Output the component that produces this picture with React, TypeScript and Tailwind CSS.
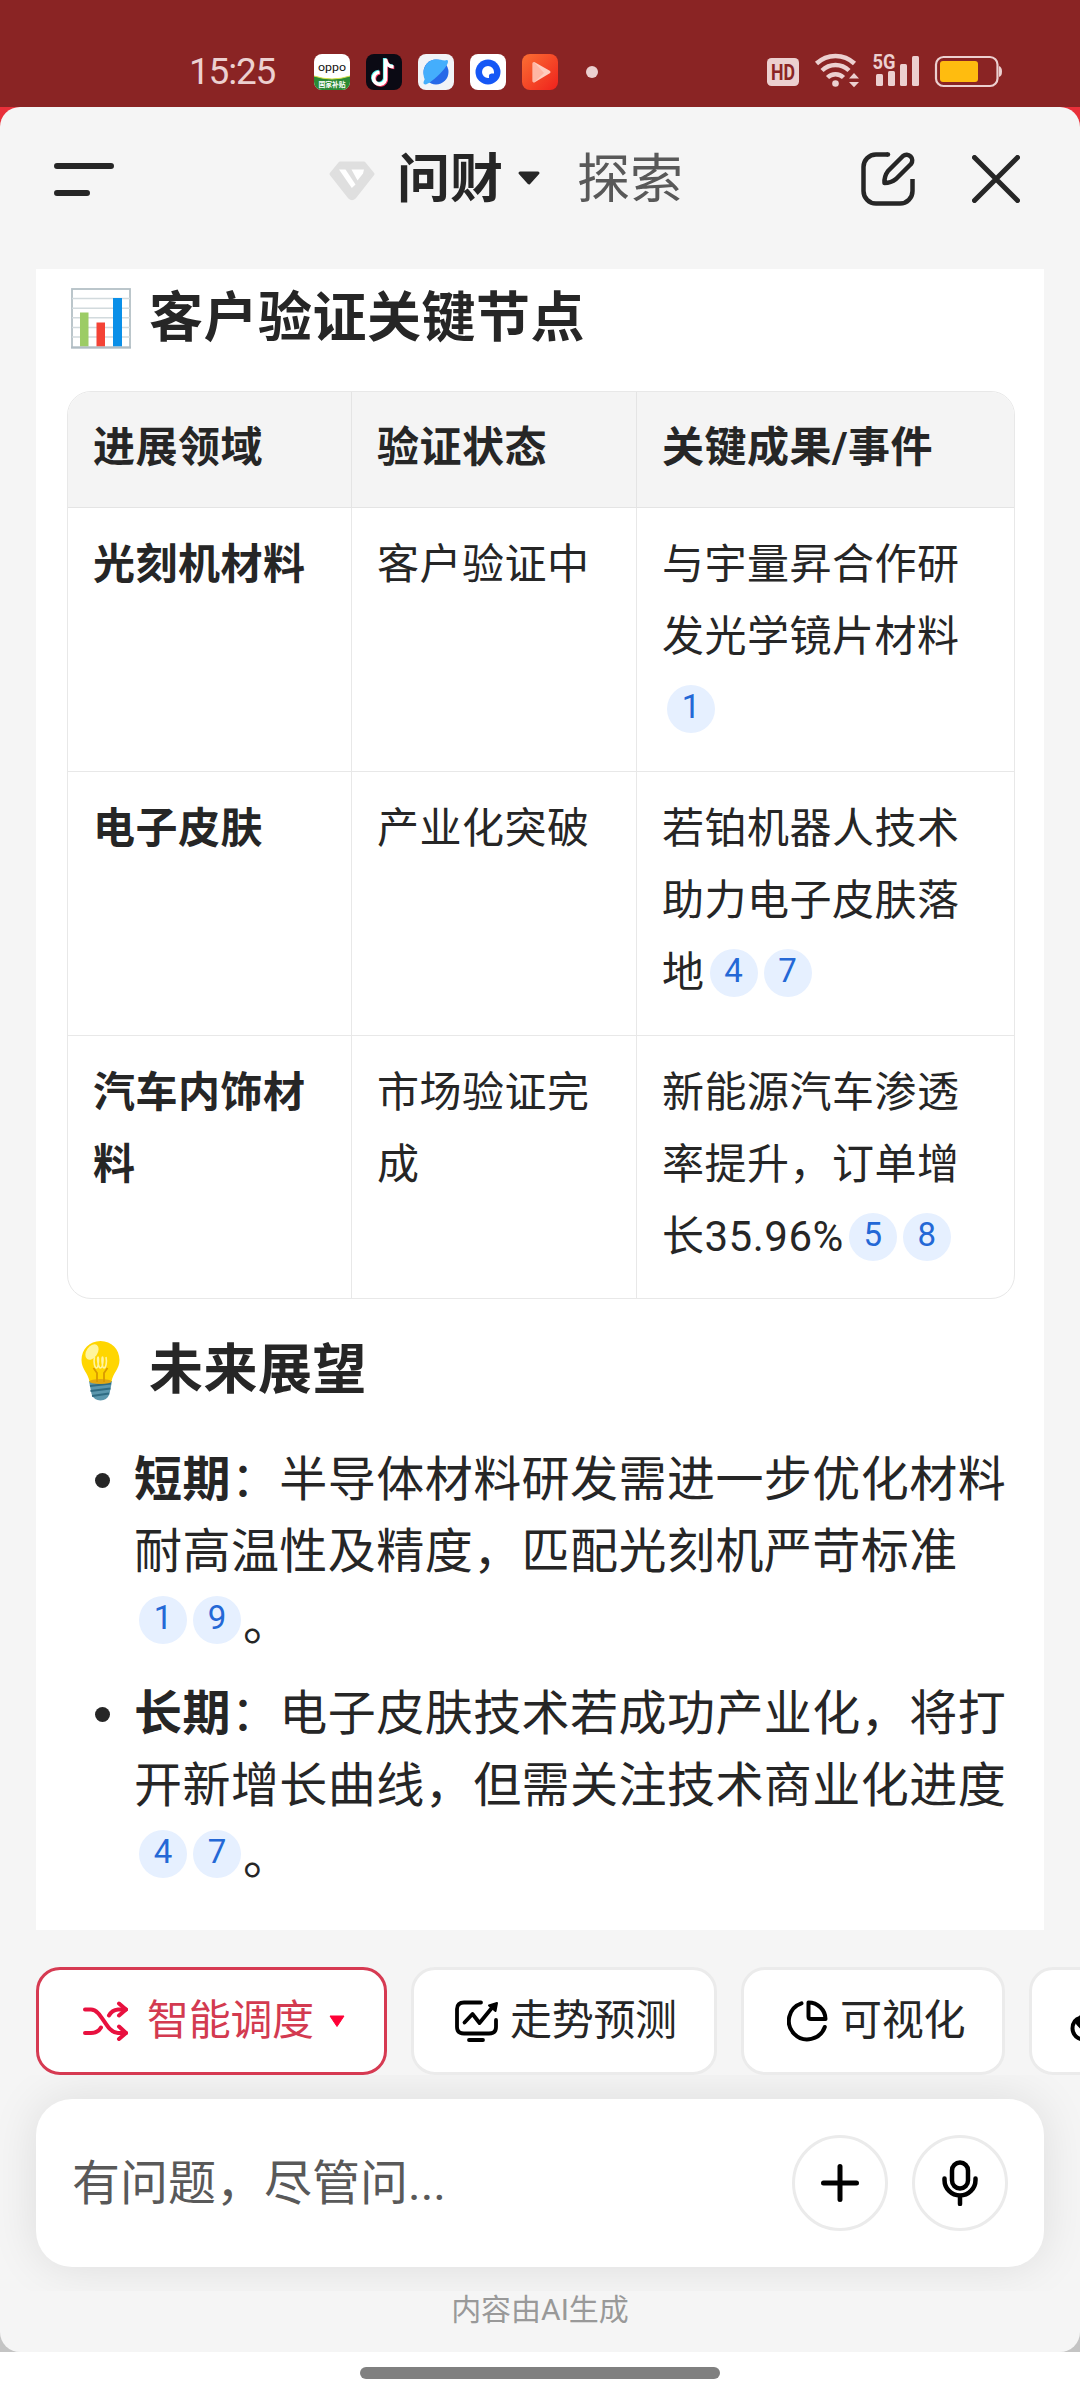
import { ReactNode } from 'react'

const tableRows = [
  {
    field: '光刻机材料',
    status: '客户验证中',
    result: '与宇量昇合作研发光学镜片材料',
    refs: [1],
  },
  {
    field: '电子皮肤',
    status: '产业化突破',
    result: '若铂机器人技术助力电子皮肤落地',
    refs: [4, 7],
  },
  {
    field: '汽车内饰材料',
    status: '市场验证完成',
    result: '新能源汽车渗透率提升，订单增长35.96%',
    refs: [5, 8],
  },
]

const outlook = [
  {
    term: '短期',
    text: '：半导体材料研发需进一步优化材料耐高温性及精度，匹配光刻机严苛标准',
    refs: [1, 9],
  },
  {
    term: '长期',
    text: '：电子皮肤技术若成功产业化，将打开新增长曲线，但需关注技术商业化进度',
    refs: [4, 7],
  },
]

const RefPill = ({ children, raised }: { children: ReactNode; raised?: boolean }) => (
  <span
    className={`ml-[6px] inline-flex size-12 items-center justify-center rounded-full bg-[#e6f0ff] pb-1 text-[33px] leading-none tracking-normal text-[#2468d6] first:ml-[5px] ${
      raised ? 'align-[11px]' : 'align-[5px]'
    }`}
  >
    {children}
  </span>
)

const AppIcons = () => (
  <div className="ml-[39px] flex gap-4">
    <svg width="36" height="36" viewBox="0 0 36 36">
      <defs>
        <clipPath id="oppo">
          <rect width="36" height="36" rx="8" />
        </clipPath>
      </defs>
      <g clipPath="url(#oppo)">
        <rect width="36" height="36" fill="#fff" />
        <path d="M0 22Q18 28 36 22V36H0Z" fill="#2b8a34" />
        <path d="M0 22Q18 28 36 22" fill="none" stroke="#d8e14a" strokeWidth="1" />
      </g>
      <text x="18" y="17" textAnchor="middle" fontSize="11" textLength="28" lengthAdjust="spacingAndGlyphs" fill="#111">
        oppo
      </text>
      <text x="18" y="32.500" textAnchor="middle" fontSize="6.800" fontWeight="700" fill="#fff">
        国家补贴
      </text>
    </svg>
    <svg width="36" height="36" viewBox="0 0 36 36">
      <rect width="36" height="36" rx="8" fill="#0b0a14" />
      <g fill="none" strokeWidth="3.600">
        <path d="M18.700 4V22.500a6 6 0 1 1-6-5M18.700 5c.8 4 4 7 8 7" stroke="#4ff0ec" />
        <path d="M20.300 5.500V24a6 6 0 1 1-6-5M20.300 6.500c.8 4 4 7 8 7" stroke="#f8325c" />
        <path d="M19.500 4.800V23.200a6 6 0 1 1-6-5M19.500 5.800c.8 4 4 7 8 7" stroke="#fff" />
      </g>
    </svg>
    <svg width="36" height="36" viewBox="0 0 36 36">
      <rect width="36" height="36" rx="8" fill="#f1f3f7" />
      <circle cx="18" cy="18" r="12.500" fill="#2668e8" />
      <path d="M27 6.500c1.500-1 3.300-.8 3 1.500-.5 4-8 13-17 19.500-3 2.200-5.500 3.800-7 2.500-1-.9-.3-3 .7-4.800C3 16 8.500 5.500 18 5.500c3.500 0 6 .5 9 1z" fill="#44aefc" />
    </svg>
    <svg width="36" height="36" viewBox="0 0 36 36">
      <rect width="36" height="36" rx="8" fill="#fff" />
      <circle cx="18" cy="18" r="12.500" fill="#1557f5" />
      <path d="M18 12a6 6 0 0 1 6 6v1.500h-2.500a3 3 0 0 0-2.500 3.500v1h-1a6 6 0 0 1 0-12z" fill="#fff" />
    </svg>
    <svg width="36" height="36" viewBox="0 0 36 36">
      <defs>
        <linearGradient id="play" x1="0" y1="0" x2="1" y2="1">
          <stop offset="0" stopColor="#fb6f33" />
          <stop offset="1" stopColor="#ef211c" />
        </linearGradient>
      </defs>
      <rect width="36" height="36" rx="8" fill="url(#play)" />
      <path d="M12 9.500L27 18 12 27Z" fill="#ffcdbf" stroke="#ffcdbf" strokeWidth="3" strokeLinejoin="round" />
      <path d="M10.500 9q0-1 1.500-1L22 19l-10 9.500q-1.500 0-1.500-1.500z" fill="#ffa08a" opacity=".5" />
    </svg>
  </div>
)

const StatusIcons = () => (
  <svg width="240" height="41" viewBox="765 51 240 41" className="ml-[167px]" fill="#ecd0d0">
    <rect x="767" y="58" width="32" height="28" rx="4.500" />
    <text x="783" y="79.800" textAnchor="middle" fontSize="22" fontWeight="700" textLength="24" lengthAdjust="spacingAndGlyphs" fill="#8a2424">
      HD
    </text>
    <g fill="none" stroke="#ecd0d0" strokeWidth="4.500">
      <path d="M816.500 63.500a27.500 27.500 0 0 1 38 0" />
      <path d="M822 70.500a19.500 19.500 0 0 1 27 0" />
      <path d="M827.500 77.500a11.500 11.500 0 0 1 16 0" />
    </g>
    <circle cx="835.500" cy="83.500" r="3.300" />
    <path d="M849 78.500l5-5.500 5 5.500zM849 82l5 5.200 5-5.200z" />
    <text x="872.500" y="69" fontSize="21" fontWeight="700" textLength="23" lengthAdjust="spacingAndGlyphs">
      5G
    </text>
    <rect x="876" y="74" width="7" height="12" rx="1.500" />
    <rect x="888" y="71" width="7" height="15" rx="1.500" />
    <rect x="900" y="64" width="7" height="22" rx="1.500" />
    <rect x="912" y="56" width="7" height="30" rx="1.500" />
    <rect x="936" y="57" width="61.500" height="29" rx="7.500" fill="none" stroke="#ecd0d0" strokeWidth="2.200" />
    <rect x="940" y="61" width="38" height="21" rx="3" fill="#ffbc0f" />
    <path d="M999 66q3 1 3 5.500t-3 5.500z" />
  </svg>
)

const Header = () => (
  <header className="flex h-[162px] items-center pb-[19px]">
    <svg width="60" height="34" viewBox="0 0 60 34" className="ml-[54px]" stroke="#262626" strokeWidth="6" strokeLinecap="round">
      <path d="M3 4H57M3 31H33" />
    </svg>
    <svg width="46" height="40" viewBox="0 0 46 40" className="mt-[4px] ml-[215px]">
      <path d="M11 2H35L44 13 25.500 36.500Q23 39 20.500 36.500L2 13Z" fill="#dfdfdf" stroke="#dfdfdf" strokeWidth="3" strokeLinejoin="round" />
      <path d="M10 8.500H16.500L26.500 23.500 22.800 27Z" fill="#fff" />
      <path d="M22.500 8.500H35L34 12.500 28.500 19.500Z" fill="#fff" />
    </svg>
    <span className="ml-[22px] pt-[3px] text-[53px] leading-none font-bold">问财</span>
    <svg width="24" height="15" viewBox="0 0 24 15" className="ml-[14px]">
      <path d="M3 2H21L12 12Z" fill="#262626" stroke="#262626" strokeWidth="3" strokeLinejoin="round" />
    </svg>
    <span className="ml-[36px] pt-[3px] text-[53px] leading-none text-[#595959]">探索</span>
    <svg width="54" height="54" viewBox="0 0 54 54" className="ml-[178px]" fill="none" stroke="#262626" strokeWidth="4.500" strokeLinejoin="round">
      <path d="M27 2.500H15A12.500 12.500 0 0 0 2.500 15V39A12.500 12.500 0 0 0 15 51.500H39A12.500 12.500 0 0 0 51.500 39V27" />
      <circle cx="27" cy="2.500" r="2.200" fill="#262626" stroke="none" />
      <path d="M42 4a5.700 5.700 0 0 1 8 8L35 27Q30 31 23.500 31 23 24.500 27 19Z" />
    </svg>
    <svg width="48" height="48" viewBox="0 0 48 48" className="ml-[57px]" stroke="#262626" strokeWidth="5" strokeLinecap="round">
      <path d="M2.500 2.500L45.500 45.500M45.500 2.500L2.500 45.500" />
    </svg>
  </header>
)

const ChartEmoji = () => (
  <svg width="60" height="61" viewBox="0 0 60 61">
    <rect x="1" y="1" width="58" height="58.500" fill="#fff" stroke="#b4c0c6" strokeWidth="1.800" />
    <path d="M1 10.500H59M1 20.200H59M1 29.800H59M1 39.500H59M1 49H59" stroke="#d2dadd" strokeWidth="1.400" />
    <rect x="9" y="24.500" width="8.500" height="34" fill="#9ccc65" />
    <rect x="25.500" y="34.500" width="8.500" height="24" fill="#f44336" />
    <rect x="42" y="10" width="9" height="48.500" fill="#0a8fe8" />
    <path d="M0 59.500H60" stroke="#b0bcc3" strokeWidth="1.800" />
  </svg>
)

const BulbEmoji = () => (
  <svg width="60" height="61" viewBox="0 0 60 61">
    <path d="M18 41H41L38.500 54Q36 60.500 29.500 60.500T20.500 54Z" fill="#5b97ad" />
    <path d="M19 46L40 43.500M19.500 51L39.500 48.500M21 56L38 53.500" stroke="#2f6c83" strokeWidth="2" />
    <path d="M29.500 1C18.500 1 10.500 9.500 10.500 20c0 9 6.500 13 8 21.500h22c1.500-8.500 8-12.500 8-21.500C48.500 9.500 40.500 1 29.500 1z" fill="#ffd600" />
    <ellipse cx="29.500" cy="41.500" rx="11" ry="2.500" fill="#e2a610" />
    <path d="M26 42V33L22.500 28M33 42V33L36.500 28" stroke="#d99a00" strokeWidth="1.800" fill="none" />
    <path d="M23.500 17c-1 5 0 11 2 11s2.500-11 1.500-11 0 11 2.500 11 3-11 2-11-.5 11 1.500 11 3-6 2-11" stroke="#fff3a0" strokeWidth="1.600" fill="none" />
    <ellipse cx="21" cy="12" rx="5.500" ry="8.500" transform="rotate(35 21 12)" fill="#fff59d" />
  </svg>
)

const SectionTitle = ({ icon, children }: { icon: ReactNode; children: ReactNode }) => (
  <h2 className="flex h-[76px] items-center gap-[18px] pl-px text-[54px] leading-[76px] font-bold tracking-[0.5px]">
    {icon}
    <span className="pt-[2px]">{children}</span>
  </h2>
)

const ResultTable = () => (
  <div className="mt-[35px] -mr-px ml-[-3px] grid w-[948px] grid-cols-[284px_285px_377px] grid-rows-[116px_264px_264px_262px] overflow-hidden rounded-3xl border border-[#e8e8e8] text-[42px] leading-[72px] tracking-[0.5px]">
    {['进展领域', '验证状态', '关键成果/事件'].map((title) => (
      <div
        key={title}
        className="border-r border-b border-[#e4e4e4] bg-[#f4f4f4] pt-[20px] pl-[25px] font-bold nth-3:border-r-0"
      >
        {title}
      </div>
    ))}
    {tableRows.map((row, i) => {
      const line = i < tableRows.length - 1 ? 'border-b' : ''
      return (
        <div key={row.field} className="contents">
          <div className={`border-r border-[#e8e8e8] pt-[21px] pr-6 pl-[25px] font-bold ${line}`}>
            {row.field}
          </div>
          <div className={`border-r border-[#e8e8e8] pt-[21px] pr-6 pl-[25px] ${line}`}>{row.status}</div>
          <div className={`border-[#e8e8e8] pt-[21px] pr-[50px] pl-[25px] ${line}`}>
            {row.result}
            <span>
              {row.refs.map((n) => (
                <RefPill key={n}>{n}</RefPill>
              ))}
            </span>
          </div>
        </div>
      )
    })}
  </div>
)

const chipClass =
  'flex h-[108px] shrink-0 items-center rounded-3xl border-3 bg-white text-[42px] leading-none tracking-[-0.3px]'

const Chips = () => (
  <div className="flex h-[108px] gap-6 overflow-hidden pl-9">
    <div className={`${chipClass} w-[351px] border-[#d63a52] pl-[43px] text-[#d33a50]`}>
      <svg width="46" height="40" viewBox="0 0 46 40" fill="none" stroke="#e8113f" strokeWidth="4" strokeLinecap="round" strokeLinejoin="round">
        <path d="M3 8.500H9C20 8.500 24 32 36 32H44M3 32H9Q16 32 19 26.500M27 14.500Q30 9 36 8.500H44" />
        <path d="M37 2.500L44 8.500 37 14.500M37 25.500L44 32 37 38" />
      </svg>
      <span className="ml-[19px]">智能调度</span>
      <svg width="16" height="13" viewBox="0 0 16 13" className="ml-[15px]">
        <path d="M1 1H15L8 11.500Z" fill="#ff0036" stroke="#ff0036" strokeLinejoin="round" />
      </svg>
    </div>
    <div className={`${chipClass} w-[306px] border-[#ebebeb] pl-[41px]`}>
      <svg width="44" height="42" viewBox="0 0 44 42" fill="none" stroke="#000" strokeWidth="3.800" strokeLinecap="round" strokeLinejoin="round">
        <path d="M26 2.500H9Q2 2.500 2 9V27Q2 33.500 9 33.500H34Q41 33.500 41 27V20M14 40H28" />
        <path d="M9.500 22.500L17.500 14 24.500 23 38 6.500" />
        <path d="M34 5.500L42 3 40.500 11Z" fill="#000" strokeWidth="2" />
      </svg>
      <span className="ml-[11px]">走势预测</span>
    </div>
    <div className={`${chipClass} w-[264px] border-[#ebebeb] pl-[43px]`}>
      <svg width="41" height="42" viewBox="0 0 41 42" fill="none" stroke="#000" strokeWidth="4" strokeLinecap="round" strokeLinejoin="round">
        <path d="M14.500 3.300A18.500 18.500 0 1 0 37.800 27" />
        <path d="M21.500 2.500V16.500Q21.500 19 24 19H38.500A17 17 0 0 0 21.500 2.500Z" />
      </svg>
      <span className="ml-[12px]">可视化</span>
    </div>
    <div className={`${chipClass} w-[264px] border-[#ebebeb] pl-[38px]`}>
      <svg width="42" height="42" viewBox="0 0 42 42" fill="none" stroke="#000" strokeWidth="4" strokeLinecap="round">
        <path d="M11 17.500C5 19 2.500 23.500 2.500 28.500 2.500 35 8 39.500 14 39.500" />
        <path d="M9 18V26Q7 24 6 22Z" fill="#000" strokeWidth="2" />
      </svg>
    </div>
  </div>
)

const Composer = () => (
  <div className="h-[216px] overflow-hidden px-9 pt-6">
    <div className="flex h-[168px] items-center gap-6 rounded-[36px] bg-white pr-9 pl-9 shadow-[0_0_48px_rgba(0,0,0,0.1)]">
      <span className="flex-1 pt-px text-[48px] leading-none text-[#595959]">有问题，尽管问...</span>
      <div className="flex size-24 items-center justify-center rounded-full border-3 border-[#ebebeb]">
        <svg width="38" height="38" viewBox="0 0 38 38" stroke="#000" strokeWidth="5" strokeLinecap="round">
          <path d="M19 2.500V35.500M2.500 19H35.500" />
        </svg>
      </div>
      <div className="flex size-24 items-center justify-center rounded-full border-3 border-[#ebebeb]">
        <svg width="36" height="46" viewBox="0 0 36 46" fill="none" stroke="#000" strokeWidth="4.500" strokeLinecap="round">
          <rect x="10" y="2.500" width="16" height="26" rx="8" />
          <path d="M2.500 18.500V20A15.500 15.500 0 0 0 33.500 20V18.500M18 36V44" />
        </svg>
      </div>
    </div>
  </div>
)

export default function App() {
  return (
    <div className="h-[2400px] w-[1080px] overflow-hidden bg-white font-[Roboto,'Noto_Sans_CJK_SC',sans-serif] text-[#262626]">
      <div className="flex h-[107px] items-center bg-[#8a2424] pt-[36px] pl-[189px]">
        <span className="w-[86px] text-[37px] leading-none tracking-[-1.2px] whitespace-nowrap text-[#ecd0d0]">15:25</span>
        <AppIcons />
        <span className="ml-7 size-3 rounded-full bg-[#ecd0d0]" />
        <StatusIcons />
      </div>
      <div className="h-[2245px] bg-linear-to-b from-[#e8303a] from-50% to-[#c4c4c4] to-50%">
        <div className="h-full overflow-hidden rounded-[20px] bg-[#f5f5f5]">
          <Header />
          <main className="mx-9 h-[1661px] bg-white px-[34px] pt-[11px]">
            <SectionTitle icon={<ChartEmoji />}>客户验证关键节点</SectionTitle>
            <ResultTable />
            <div className="mt-[33px]">
              <SectionTitle icon={<BulbEmoji />}>未来展望</SectionTitle>
            </div>
            <ul className="mt-[36px] flex flex-col gap-[18px] text-[48px] leading-[72px] tracking-[0.45px]">
              {outlook.map((item) => (
                <li key={item.term} className="flex h-[216px]">
                  <span className="mt-[29px] mr-6 ml-[25px] size-[15px] shrink-0 rounded-full bg-[#262626]" />
                  <p className="w-[880px]">
                    <b>{item.term}</b>
                    {item.text}
                    <span className="mr-[2px]">
                      {item.refs.map((n) => (
                        <RefPill key={n} raised>
                          {n}
                        </RefPill>
                      ))}
                    </span>
                    。
                  </p>
                </li>
              ))}
            </ul>
          </main>
          <div className="pt-[37px]">
            <Chips />
          </div>
          <Composer />
          <p className="mt-[3px] text-center text-[30px] leading-8 text-[#999]">内容由AI生成</p>
        </div>
      </div>
      <div className="mx-auto mt-[15px] h-3 w-[360px] rounded-full bg-[#808080]" />
    </div>
  )
}
